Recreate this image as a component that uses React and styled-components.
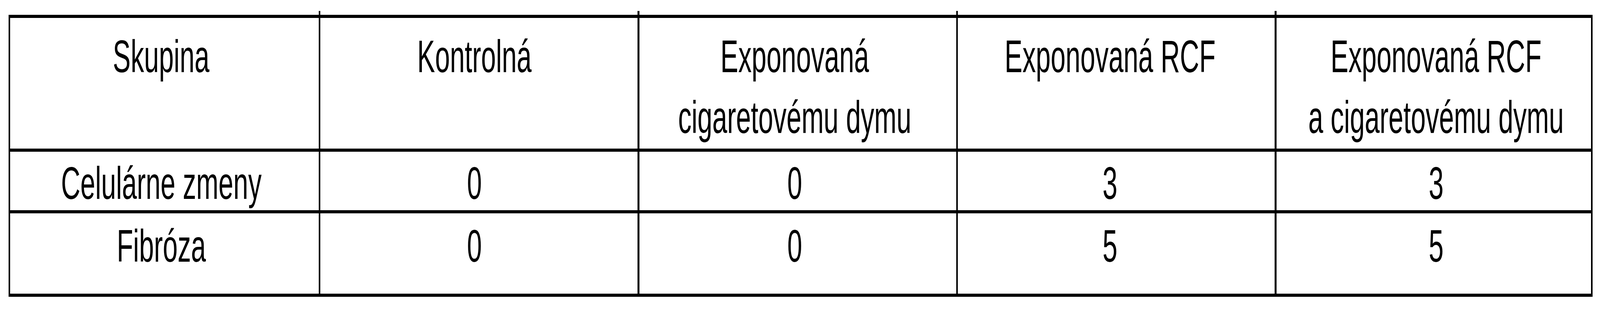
import React from "react";
import styled, { createGlobalStyle } from "styled-components";

const GlobalStyle = createGlobalStyle`
  * {
    box-sizing: border-box;
  }

  body {
    margin: 0;
    background: #ffffff;
  }
`;

/* the sheet the table was drawn on is 7005 units wide;
   horizontal sizes follow the real window width */
const SHEET = 7005;

const Page = styled.div`
  padding: 38px 0 0 ${(p) => 38 * p.$k}px;
  height: 800px;
  background: #ffffff;
  overflow: hidden;
`;

/* the rules are the black background showing through the gaps */
const Table = styled.div`
  display: inline-grid;
  grid-template-columns: ${(p) => p.$cols.map((w) => `${w * p.$k}px`).join(" ")};
  grid-template-rows: 335px 150px 206px;
  column-gap: ${(p) => 8 * p.$k}px;
  row-gap: 8px;
  border-style: solid;
  border-color: #000000;
  border-width: 8px ${(p) => 8 * p.$k}px;
  background: #000000;
  font-family: "Liberation Sans", Arial, sans-serif;
  font-size: 117px;
  color: #000000;
`;

const Cell = styled.div`
  position: relative;
  display: flex;
  flex-direction: column;
  align-items: center;
  min-width: 0;
  background: #ffffff;
  line-height: 117px;
  padding-top: ${(p) => p.$top}px;
  padding-left: ${(p) => Math.max(0, p.$shift * 2 * p.$k)}px;
  padding-right: ${(p) => Math.max(0, -p.$shift * 2 * p.$k)}px;
`;

const HeadCell = styled(Cell)`
  line-height: 156px;

  /* the inner rules poke a little above the top border */
  &::before {
    content: "";
    display: ${(p) => (p.$tick ? "block" : "none")};
    position: absolute;
    top: -18px;
    left: ${(p) => -8 * p.$k}px;
    width: ${(p) => 8 * p.$k}px;
    height: 10px;
    background: #000000;
  }
`;

const Label = styled.span`
  display: inline-block;
  white-space: nowrap;
  text-align: center;
  transform: scaleX(${(p) => p.$k});
  transform-origin: center top;
`;

const columns = [1350, 1389, 1386, 1387, 1377];
const shifts = [-14, -21, -13, -28, 10];

const header = [
  ["Skupina"],
  ["Kontrolná"],
  ["Exponovaná", "cigaretovému dymu"],
  ["Exponovaná RCF"],
  ["Exponovaná RCF", "a cigaretovému dymu"],
];

const rows = [
  { top: 22, cells: ["Celulárne zmeny", "0", "0", "3", "3"] },
  { top: 25, cells: ["Fibróza", "0", "0", "5", "5"] },
];

function App() {
  const k = (typeof window !== "undefined" ? window.innerWidth : SHEET) / SHEET;

  return (
    <>
      <GlobalStyle />
      <Page $k={k}>
        <Table $k={k} $cols={columns}>
          {header.map((lines, i) => (
            <HeadCell key={`h${i}`} $k={k} $top={21} $shift={shifts[i]} $tick={i > 0}>
              <Label $k={k}>
                {lines.map((line, j) => (
                  <React.Fragment key={j}>
                    {j > 0 && <br />}
                    {line}
                  </React.Fragment>
                ))}
              </Label>
            </HeadCell>
          ))}
          {rows.map((row, r) =>
            row.cells.map((value, i) => (
              <Cell key={`r${r}c${i}`} $k={k} $top={row.top} $shift={shifts[i]}>
                <Label $k={k}>{value}</Label>
              </Cell>
            ))
          )}
        </Table>
      </Page>
    </>
  );
}

export default App;
